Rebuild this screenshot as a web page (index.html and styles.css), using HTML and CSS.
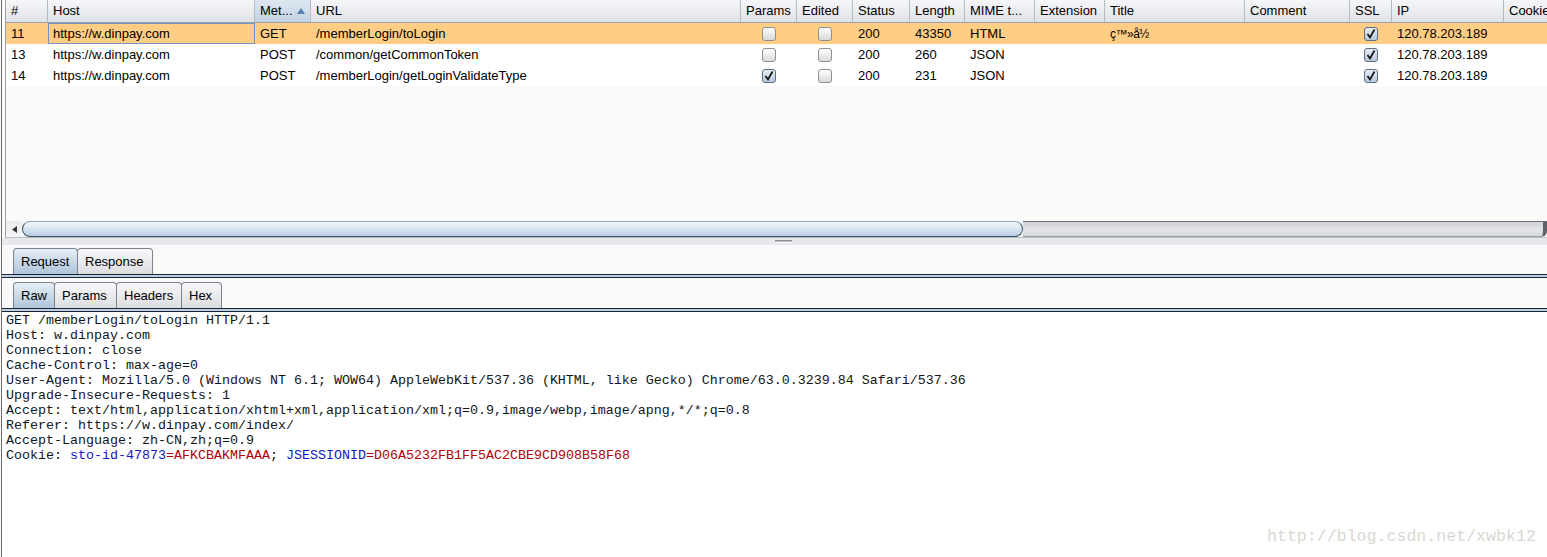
FILE: index.html
```html
<!DOCTYPE html>
<html>
<head>
<meta charset="utf-8">
<title>Proxy history</title>
<link rel="stylesheet" href="styles.css">
</head>
<body>
<div class="app">
  <section class="top">
    <div class="frame">
      <div class="row head">
        <div class="c">#</div>
        <div class="c">Host</div>
        <div class="c sorted">Met...<svg class="arrow" width="8" height="6" viewBox="0 0 8 6"><path d="M0 6 L4 0 L8 6 Z" fill="#5a80ad"/></svg></div>
        <div class="c">URL</div>
        <div class="c">Params</div>
        <div class="c">Edited</div>
        <div class="c">Status</div>
        <div class="c">Length</div>
        <div class="c">MIME t...</div>
        <div class="c">Extension</div>
        <div class="c">Title</div>
        <div class="c">Comment</div>
        <div class="c">SSL</div>
        <div class="c">IP</div>
        <div class="c">Cookies</div>
      </div>
      <div class="row sel">
        <div class="c">11</div>
        <div class="c focus">https://w.dinpay.com</div>
        <div class="c">GET</div>
        <div class="c">/memberLogin/toLogin</div>
        <div class="c cb"><span class="box"></span></div>
        <div class="c cb"><span class="box"></span></div>
        <div class="c">200</div>
        <div class="c">43350</div>
        <div class="c">HTML</div>
        <div class="c"></div>
        <div class="c title">ç™»å½</div>
        <div class="c"></div>
        <div class="c cb"><span class="box on"><svg width="12" height="12" viewBox="0 0 12 12"><path d="M2.5 6 L5 9.5 L9.5 1.5" fill="none" stroke="#111" stroke-width="1.7"/></svg></span></div>
        <div class="c">120.78.203.189</div>
        <div class="c"></div>
      </div>
      <div class="row">
        <div class="c">13</div>
        <div class="c">https://w.dinpay.com</div>
        <div class="c">POST</div>
        <div class="c">/common/getCommonToken</div>
        <div class="c cb"><span class="box"></span></div>
        <div class="c cb"><span class="box"></span></div>
        <div class="c">200</div>
        <div class="c">260</div>
        <div class="c">JSON</div>
        <div class="c"></div>
        <div class="c"></div>
        <div class="c"></div>
        <div class="c cb"><span class="box on"><svg width="12" height="12" viewBox="0 0 12 12"><path d="M2.5 6 L5 9.5 L9.5 1.5" fill="none" stroke="#111" stroke-width="1.7"/></svg></span></div>
        <div class="c">120.78.203.189</div>
        <div class="c"></div>
      </div>
      <div class="row">
        <div class="c">14</div>
        <div class="c">https://w.dinpay.com</div>
        <div class="c">POST</div>
        <div class="c">/memberLogin/getLoginValidateType</div>
        <div class="c cb"><span class="box on"><svg width="12" height="12" viewBox="0 0 12 12"><path d="M2.5 6 L5 9.5 L9.5 1.5" fill="none" stroke="#111" stroke-width="1.7"/></svg></span></div>
        <div class="c cb"><span class="box"></span></div>
        <div class="c">200</div>
        <div class="c">231</div>
        <div class="c">JSON</div>
        <div class="c"></div>
        <div class="c"></div>
        <div class="c"></div>
        <div class="c cb"><span class="box on"><svg width="12" height="12" viewBox="0 0 12 12"><path d="M2.5 6 L5 9.5 L9.5 1.5" fill="none" stroke="#111" stroke-width="1.7"/></svg></span></div>
        <div class="c">120.78.203.189</div>
        <div class="c"></div>
      </div>
      <div class="empty"></div>
      <div class="hscroll">
        <div class="sbtn"><svg width="5" height="7" viewBox="0 0 5 7"><path d="M5 0 L0 3.5 L5 7 Z" fill="#333"/></svg></div>
        <div class="thumb"></div>
        <div class="track"></div>
      </div>
    </div>
  </section>
  <div class="divider"><span class="grip"></span></div>
  <section class="bottom">
    <div class="tabs">
      <div class="tab on w-req">Request</div>
      <div class="tab w-resp">Response</div>
    </div>
    <div class="tabline"></div>
    <div class="gap"></div>
    <div class="tabs">
      <div class="tab on w-raw">Raw</div>
      <div class="tab w-params">Params</div>
      <div class="tab w-headers">Headers</div>
      <div class="tab w-hex">Hex</div>
    </div>
    <div class="tabline"></div>
<pre class="raw">GET /memberLogin/toLogin HTTP/1.1
Host: w.dinpay.com
Connection: close
Cache-Control: max-age=0
User-Agent: Mozilla/5.0 (Windows NT 6.1; WOW64) AppleWebKit/537.36 (KHTML, like Gecko) Chrome/63.0.3239.84 Safari/537.36
Upgrade-Insecure-Requests: 1
Accept: text/html,application/xhtml+xml,application/xml;q=0.9,image/webp,image/apng,*/*;q=0.8
Referer: https://w.dinpay.com/index/
Accept-Language: zh-CN,zh;q=0.9
Cookie: <span class="pn">sto-id-47873</span><span class="pv">=AFKCBAKMFAAA</span>; <span class="pn">JSESSIONID</span><span class="pv">=D06A5232FB1FF5AC2CBE9CD908B58F68</span></pre>
  </section>
</div>
<div class="watermark">http://blog.csdn.net/xwbk12</div>
</body>
</html>
```
FILE: styles.css
```css
* { box-sizing: border-box; margin: 0; padding: 0; }
html, body { width: 1547px; height: 557px; }
body {
  overflow: hidden;
  background: #fafafa;
  font-family: "Liberation Sans", Arial, sans-serif;
  font-size: 13px;
  color: #000;
  position: relative;
}
.app {
  height: 557px;
  margin-left: 1px;
  border-left: 1px solid #6b6b6b;
  display: flex;
  flex-direction: column;
}
.top { padding-left: 3px; }
.frame {
  height: 238px;
  border-left: 1px solid #9ea3a9;
  border-bottom: 1px solid #b9bdc2;
  display: flex;
  flex-direction: column;
  overflow: hidden;
  background: #fafafa;
}
.row {
  display: grid;
  grid-template-columns: 42px 207px 56px 430px 56px 56px 57px 55px 70px 70px 140px 105px 42px 112px 80px;
  height: 21px;
  flex: none;
  background: #fff;
}
.row.head {
  height: 23px;
  background: linear-gradient(#f5f6f8, #dfe2e6);
  border-bottom: 1px solid #9ba1a8;
}
.row.sel { background: #ffcd84; }
.c {
  padding-left: 5px;
  padding-top: 1px;
  white-space: nowrap;
  overflow: hidden;
  line-height: 20px;
}
.title { font-size: 12px; letter-spacing: -0.5px; }
.head .c {
  border-right: 1px solid #b6bbc2;
  padding-top: 0;
  line-height: 22px;
}
.head .sorted {
  background: linear-gradient(#dde7f1, #c3d3e3);
  display: flex;
  align-items: center;
  justify-content: space-between;
  padding-right: 5px;
}
.arrow { flex: none; }
.focus {
  outline: 1px solid #7495c3;
  outline-offset: -1px;
}
.cb {
  padding: 0;
  display: flex;
  align-items: center;
  justify-content: center;
}
.box {
  width: 14px;
  height: 14px;
  border: 1px solid #8d8f92;
  border-radius: 3px;
  background: linear-gradient(#fdfdfd, #d9dadd);
  display: flex;
  align-items: center;
  justify-content: center;
}
.box.on {
  border-color: #5f6f82;
  background: linear-gradient(#e6edf4, #b5c8db);
}
.empty { flex: 1; background: #fafafa; }
.hscroll {
  height: 16px;
  flex: none;
  display: flex;
}
.sbtn {
  width: 16px;
  display: flex;
  align-items: center;
  justify-content: center;
  background: linear-gradient(#e9ebee, #f3f4f6);
}
.thumb {
  width: 1001px;
  border: 1px solid #3e5169;
  border-top-color: #8fa3b9;
  border-radius: 8px;
  background: linear-gradient(#f3f7fb, #d6e3ef 55%, #b7cce0);
}
.track {
  flex: 1;
  border-top: 1px solid #6f7378;
  border-bottom: 1px solid #9a9ea3;
  border-right: 4px solid #5d6268;
  border-radius: 0 0 6px 0;
  background: linear-gradient(#cfd2d7, #e4e6e9 60%, #d2d5d9);
}
.divider {
  height: 10px;
  flex: none;
  background: linear-gradient(#e6e8eb 0, #e6e8eb 7px, #fafafa 7px);
  display: flex;
  justify-content: center;
  padding-top: 2px;
}
.grip {
  width: 17px;
  height: 3px;
  margin-left: 18px;
  border-top: 1px solid #8e9195;
  border-bottom: 1px solid #ffffff;
  background: #b8bbbf;
}
.bottom {
  flex: 1;
  display: flex;
  flex-direction: column;
  min-height: 0;
}
.tabs {
  display: flex;
  height: 26px;
  flex: none;
  padding-left: 11px;
}
.tab {
  height: 26px;
  padding-left: 7px;
  border: 1px solid #7b8490;
  border-bottom: none;
  border-radius: 4px 4px 0 0;
  background: linear-gradient(#f8f8f9, #dcdde0);
  line-height: 26px;
  margin-right: -1px;
  white-space: nowrap;
}
.tab.on {
  background: linear-gradient(#e6edf4, #aec5da);
  position: relative;
  z-index: 1;
}
.w-req { width: 65px; }
.w-resp { width: 76px; }
.w-raw { width: 42px; }
.w-params { width: 63px; }
.w-headers { width: 66px; }
.w-hex { width: 41px; }
.tabline {
  height: 4px;
  flex: none;
  border-top: 1px solid #1e252e;
  border-bottom: 1px solid #1e252e;
  background: #bad0e6;
}
.gap { height: 4px; flex: none; background: #fafafa; }
.raw {
  flex: 1;
  background: #fff;
  font-family: "Liberation Mono", "Courier New", monospace;
  font-size: 13.33px;
  line-height: 15px;
  padding: 1px 0 0 4px;
  white-space: pre;
  color: #141414;
  overflow: hidden;
}
.pn { color: #1414c4; }
.pv { color: #b40000; }
.watermark {
  position: absolute;
  left: 1267px;
  top: 527px;
  font-family: "Liberation Mono", "Courier New", monospace;
  font-size: 16.6px;
  line-height: 20px;
  color: #d8d8d0;
  white-space: nowrap;
}
```
